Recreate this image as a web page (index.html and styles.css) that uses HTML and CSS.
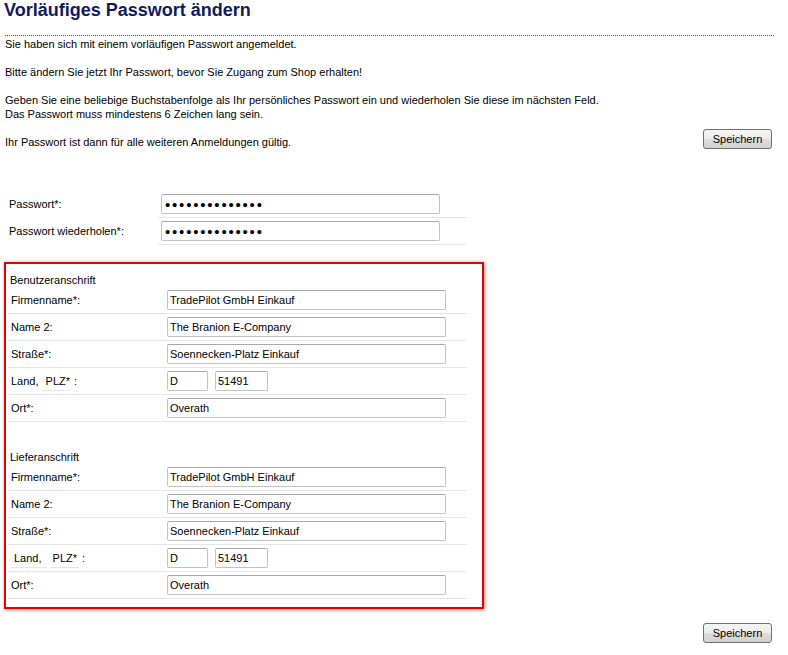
FILE: index.html
```html
<!DOCTYPE html>
<html lang="de">
<head>
<meta charset="utf-8">
<title>Vorläufiges Passwort ändern</title>
<link rel="stylesheet" href="styles.css">
</head>
<body>
<div class="page">
  <h1 class="title">Vorläufiges Passwort ändern</h1>
  <div class="rule"></div>
  <div class="intro">
    <p class="para">Sie haben sich mit einem vorläufigen Passwort angemeldet.</p>
    <p class="para">Bitte ändern Sie jetzt Ihr Passwort, bevor Sie Zugang zum Shop erhalten!</p>
    <p class="para para-tight">Geben Sie eine beliebige Buchstabenfolge als Ihr persönliches Passwort ein und wiederholen Sie diese im nächsten Feld.<br>Das Passwort muss mindestens 6 Zeichen lang sein.</p>
    <div class="intro-last">
      <span>Ihr Passwort ist dann für alle weiteren Anmeldungen gültig.</span>
      <button class="btn" type="button">Speichern</button>
    </div>
  </div>

  <div class="pw">
    <div class="pw-row">
      <label class="pw-label">Passwort*:</label>
      <div class="pw-cell"><input class="field field-pw" type="password" value="abcdefghijklmn"></div>
    </div>
    <div class="pw-row">
      <label class="pw-label">Passwort wiederholen*:</label>
      <div class="pw-cell"><input class="field field-pw" type="password" value="abcdefghijklmn"></div>
    </div>
  </div>

  <div class="addr-box">
    <div class="addr-head">Benutzeranschrift</div>
    <div class="addr-row">
      <label class="addr-label">Firmenname*:</label>
      <div class="addr-cell"><input class="field field-wide" type="text" value="TradePilot GmbH Einkauf"></div>
    </div>
    <div class="addr-row">
      <label class="addr-label">Name 2:</label>
      <div class="addr-cell"><input class="field field-wide" type="text" value="The Branion E-Company"></div>
    </div>
    <div class="addr-row">
      <label class="addr-label">Straße*:</label>
      <div class="addr-cell"><input class="field field-wide" type="text" value="Soennecken-Platz Einkauf"></div>
    </div>
    <div class="addr-row">
      <label class="addr-label">Land, <span class="u u-plz1">PLZ*</span> :</label>
      <div class="addr-cell pair"><input class="field field-land" type="text" value="D"><input class="field field-plz" type="text" value="51491"></div>
    </div>
    <div class="addr-row">
      <label class="addr-label">Ort*:</label>
      <div class="addr-cell"><input class="field field-wide" type="text" value="Overath"></div>
    </div>

    <div class="addr-head addr-head-2">Lieferanschrift</div>
    <div class="addr-row">
      <label class="addr-label">Firmenname*:</label>
      <div class="addr-cell"><input class="field field-wide" type="text" value="TradePilot GmbH Einkauf"></div>
    </div>
    <div class="addr-row">
      <label class="addr-label">Name 2:</label>
      <div class="addr-cell"><input class="field field-wide" type="text" value="The Branion E-Company"></div>
    </div>
    <div class="addr-row">
      <label class="addr-label">Straße*:</label>
      <div class="addr-cell"><input class="field field-wide" type="text" value="Soennecken-Platz Einkauf"></div>
    </div>
    <div class="addr-row">
      <label class="addr-label"><span class="u u-land">Land,</span> <span class="u u-plz2">PLZ*</span> :</label>
      <div class="addr-cell pair"><input class="field field-land" type="text" value="D"><input class="field field-plz" type="text" value="51491"></div>
    </div>
    <div class="addr-row">
      <label class="addr-label">Ort*:</label>
      <div class="addr-cell"><input class="field field-wide" type="text" value="Overath"></div>
    </div>
  </div>

  <div class="actions">
    <button class="btn" type="button">Speichern</button>
  </div>
</div>
</body>
</html>
```

FILE: styles.css
```css
html, body {
  margin: 0;
  padding: 0;
  background: #ffffff;
}

body {
  font-family: "Liberation Sans", Arial, sans-serif;
  font-size: 11px;
  line-height: 14px;
  color: #000000;
}

.page {
  padding: 0 14px 0 5px;
}

.title {
  margin: 0;
  font-size: 18px;
  line-height: 21px;
  font-weight: bold;
  color: #101c5e;
  margin-left: -1px;
}

.rule {
  margin-top: 14px;
  border-top: 1px dotted #555555;
  height: 0;
}

.intro {
  margin-top: 1px;
}

.para {
  margin: 0 0 14px 0;
}

.para-tight {
  margin-bottom: 8px;
}

.intro-last {
  display: flex;
  justify-content: space-between;
  align-items: flex-end;
}

.btn {
  width: 69px;
  height: 20px;
  margin-right: 2px;
  padding: 0;
  border: 1px solid #707070;
  border-radius: 3px;
  background: linear-gradient(#f4f4f4 0%, #ececec 50%, #dedede 50%, #d0d0d0 100%);
  font-family: "Liberation Sans", Arial, sans-serif;
  font-size: 11px;
  color: #000000;
  box-sizing: border-box;
}

/* Password block */
.pw {
  margin-top: 42px;
  width: 462px;
}

.pw-row {
  display: grid;
  grid-template-columns: 153px 309px;
}

.pw-label {
  padding: 6px 0 0 4px;
  line-height: 14px;
}

.pw-cell {
  padding: 3px 0 3px 3px;
  border-bottom: 1px solid #e6e6e6;
}

/* Inputs */
.field {
  display: block;
  box-sizing: border-box;
  height: 20px;
  margin: 0;
  padding: 0 2px;
  border: 1px solid #c3c3c3;
  border-top-color: #a9a9a9;
  border-radius: 2px;
  font-family: "Liberation Sans", Arial, sans-serif;
  font-size: 11px;
  color: #000000;
  background: #ffffff;
}

.field-pw {
  width: 279px;
  font-size: 15px;
  letter-spacing: 1.8px;
  padding-left: 3px;
}

.field-wide {
  width: 279px;
}

.field-land {
  width: 41px;
}

.field-plz {
  width: 53px;
}

.pair {
  display: flex;
  gap: 7px;
}

/* Address box */
.addr-box {
  margin-top: 17px;
  margin-left: -1px;
  width: 480px;
  box-sizing: border-box;
  border: 2px solid #e60000;
  box-shadow: 1px 1px 4px rgba(0, 0, 0, 0.45);
  padding: 9px 0 8px 2px;
}

.addr-head {
  padding-left: 2px;
  line-height: 14px;
}

.addr-head-2 {
  margin-top: 28px;
}

.addr-row {
  display: grid;
  grid-template-columns: 159px 300px;
  width: 459px;
  padding: 3px 0;
  border-bottom: 1px solid #e6e6e6;
}

.addr-label {
  padding: 3px 0 0 3px;
  line-height: 14px;
}

.u {
  display: inline-block;
  line-height: 14px;
  padding-bottom: 2px;
  border-bottom: 1px solid #e6e6e6;
}

.u-plz1 {
  padding-left: 4px;
  padding-right: 1px;
}

.u-land {
  padding-left: 3px;
  padding-right: 5px;
}

.u-plz2 {
  padding-left: 3px;
  padding-right: 2px;
}

.actions {
  margin-top: 14px;
  display: flex;
  justify-content: flex-end;
}
```
